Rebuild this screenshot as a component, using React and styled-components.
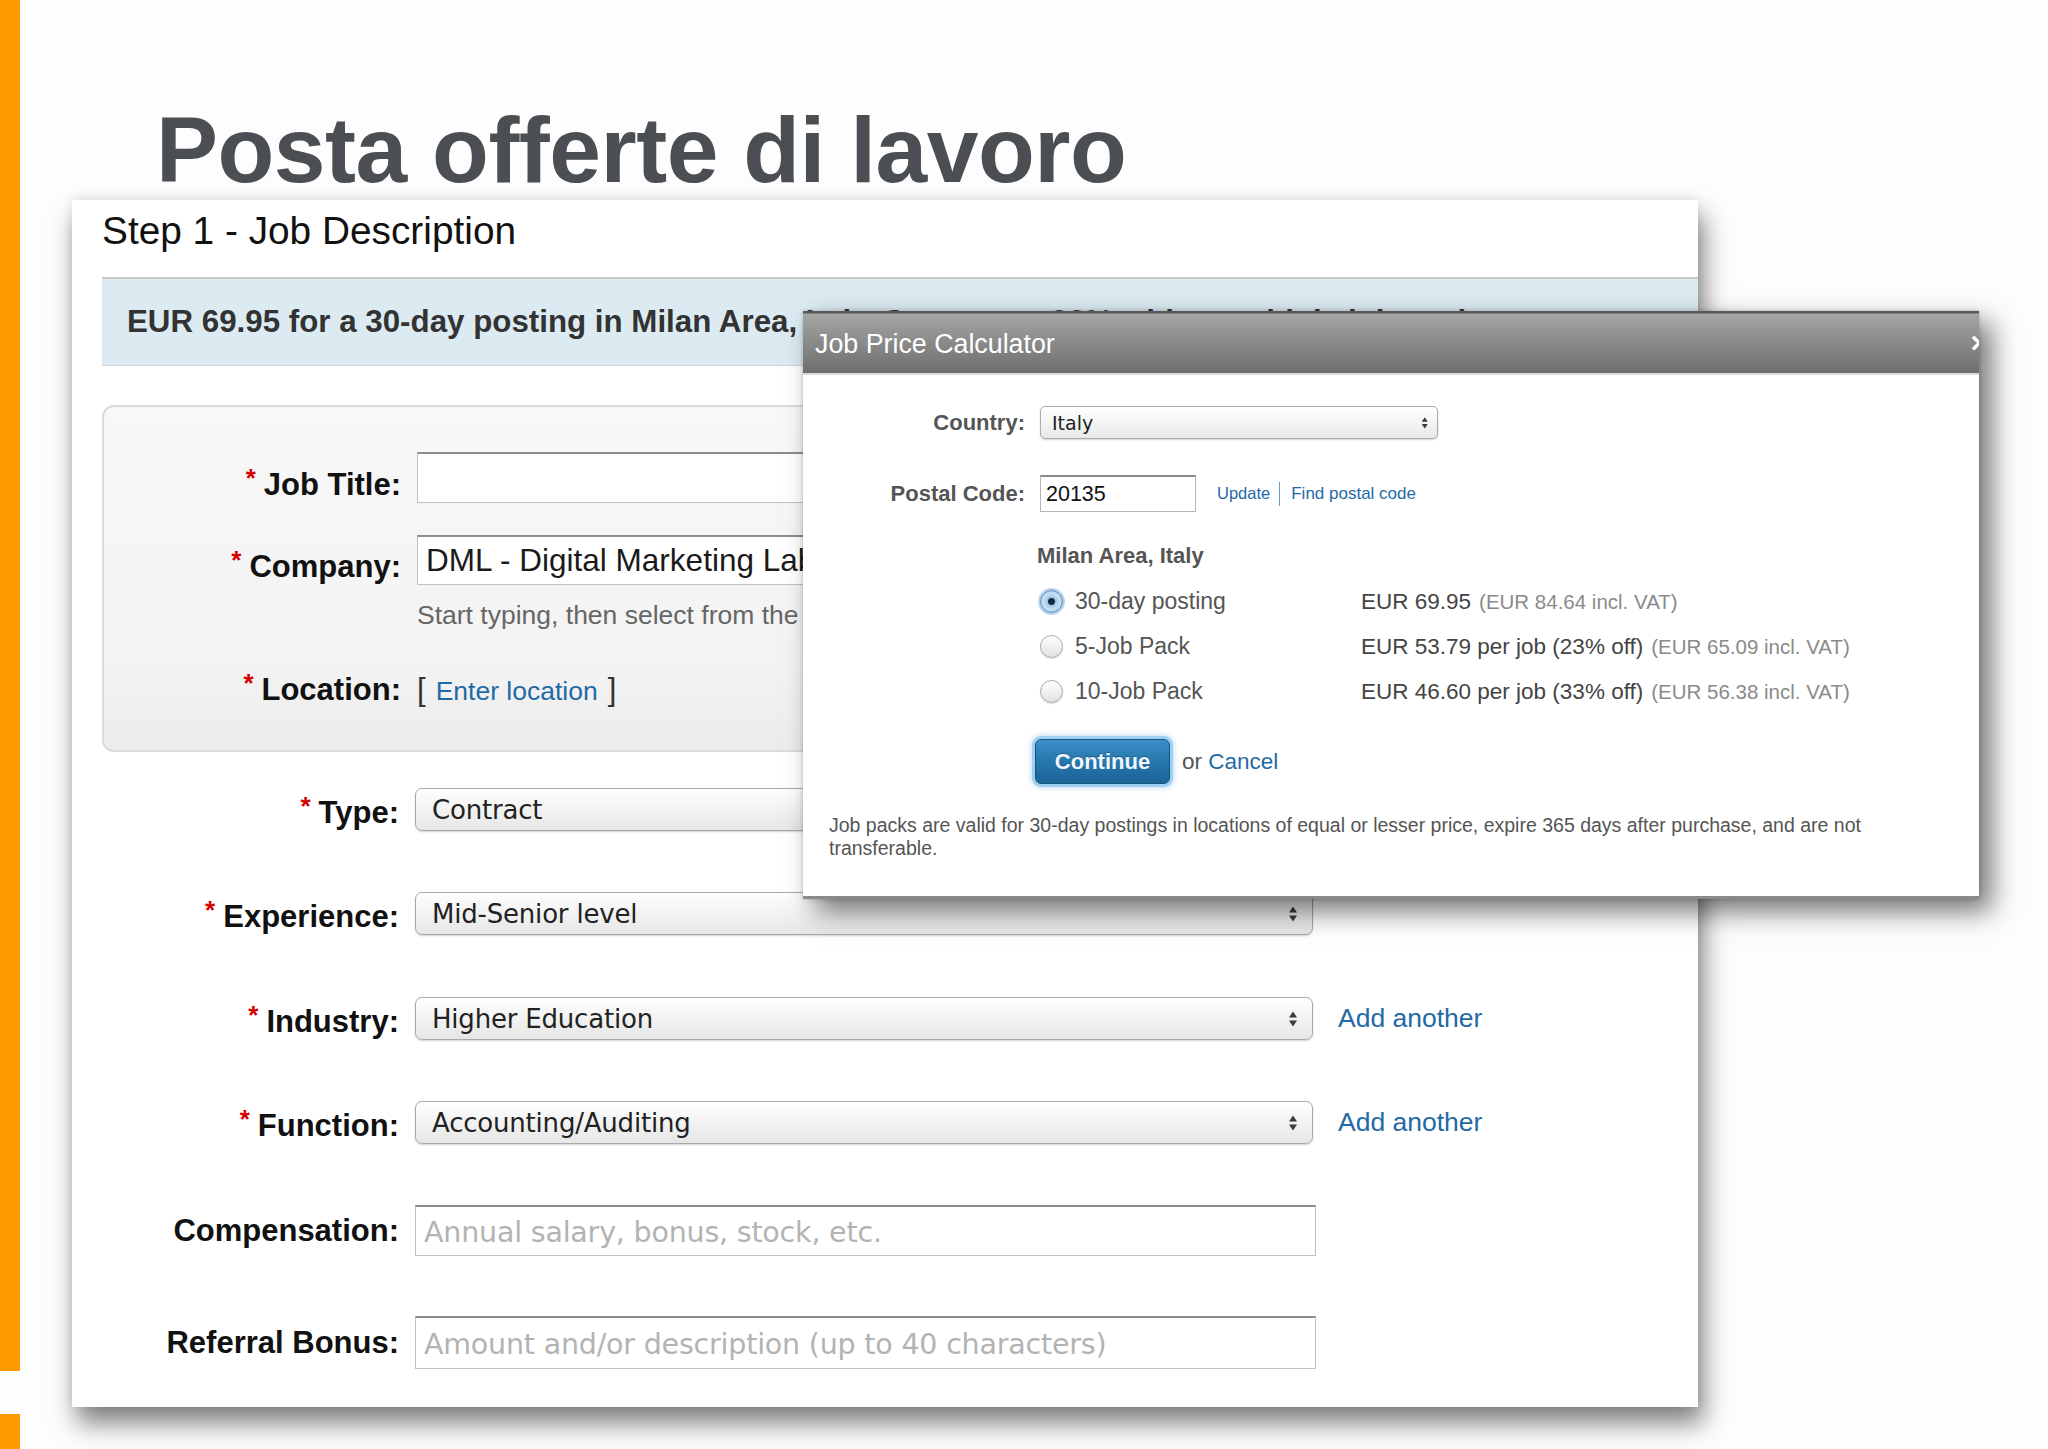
import React from "react";
import styled, { createGlobalStyle } from "styled-components";

const GlobalStyle = createGlobalStyle`
  html, body {
    margin: 0;
    padding: 0;
    background: #fdfdfd;
  }
  body {
    font-family: "Liberation Sans", Arial, sans-serif;
  }
  * {
    box-sizing: border-box;
  }
`;

const Page = styled.div`
  display: flex;
  width: 2048px;
  height: 1449px;
  overflow: hidden;
  background: #fdfdfd;
`;

const Accent = styled.div`
  flex: none;
  width: 20px;
  display: flex;
  flex-direction: column;
  gap: 43px;
`;

const AccentPiece = styled.div`
  background: #ff9a00;
  height: ${({ $h }) => $h}px;
`;

const Content = styled.main`
  flex: 1;
  padding: 104px 0 0 52px;
`;

const Title = styled.h1`
  margin: 0 0 3px 84px;
  font-size: 93px;
  line-height: 93px;
  font-weight: bold;
  color: #4b4f54;
  letter-spacing: -0.5px;
  white-space: nowrap;
`;

const Panel = styled.section`
  position: relative;
  width: 1626px;
  height: 1207px;
  background: #fff;
  padding: 9px 0 0 30px;
  box-shadow: 0 -3px 10px rgba(0, 0, 0, 0.07), 5px 16px 24px rgba(0, 0, 0, 0.5);
`;

const StepTitle = styled.h2`
  margin: 0;
  font-size: 38.8px;
  line-height: 44px;
  font-weight: normal;
  color: #111;
`;

const Banner = styled.div`
  margin-top: 24px;
  height: 89px;
  border-top: 2px solid #c8c8c8;
  border-bottom: 1px solid #d2d2d2;
  background: #dcebf2;
  padding: 25px 0 0 25px;
  font-size: 31.3px;
  line-height: 36px;
  font-weight: bold;
  color: #333;
  white-space: nowrap;
  overflow: hidden;
`;

const GrayBox = styled.div`
  margin-top: 39px;
  width: 1400px;
  height: 347px;
  border: 2px solid #dadada;
  border-radius: 12px;
  background: linear-gradient(180deg, #f8f8f8 0%, #f3f3f3 75%, #ececec 100%);
  padding-top: 45px;
`;

const FieldRow = styled.div`
  display: grid;
  grid-template-columns: 297px auto auto;
  justify-content: start;
  column-gap: 16px;
  align-items: ${({ $align }) => $align || "center"};
  margin-top: ${({ $mt }) => $mt || 0}px;
`;

const Label = styled.label`
  justify-self: end;
  font-size: 31px;
  line-height: 36px;
  font-weight: bold;
  color: #111;
  white-space: nowrap;
`;

const Req = styled.span`
  color: #d40000;
  font-size: 26px;
  vertical-align: 8px;
  margin-right: 8px;
`;

const TextInput = styled.input`
  width: 901px;
  height: ${({ $h }) => $h || 51}px;
  border: 1px solid #c2c2c2;
  border-top: 2px solid #8c8c8c;
  background: #fff;
  padding: 0 8px;
  font-family: "Liberation Sans", Arial, sans-serif;
  font-size: 31.5px;
  color: #1a1a1a;
  outline: none;
  &::placeholder {
    font-family: "DejaVu Sans", sans-serif;
    font-size: 28.5px;
    color: #b3b3b3;
    letter-spacing: -0.2px;
  }
`;

const SelectBox = styled.div`
  width: 898px;
  height: 43px;
  border: 1px solid #a9a9a9;
  border-radius: 7px;
  background: linear-gradient(180deg, #fefefe 0%, #f1f1f1 55%, #e6e6e6 100%);
  box-shadow: 0 1px 2px rgba(0, 0, 0, 0.18);
  display: flex;
  align-items: center;
  justify-content: space-between;
  padding: 0 14px 0 16px;
  font-family: "DejaVu Sans", sans-serif;
  font-size: 26px;
  color: #222;
  letter-spacing: -0.2px;
`;

const Hint = styled.div`
  grid-column: 2;
  font-size: 26.5px;
  line-height: 30px;
  color: #666;
  white-space: nowrap;
`;

const Bracket = styled.span`
  font-size: 31px;
  line-height: 36px;
  color: #333;
`;

const Link = styled.a`
  color: #1f6aa5;
  font-size: ${({ $size }) => $size || 26.5}px;
  margin-left: ${({ $ml }) => $ml || 0}px;
  text-decoration: none;
  cursor: pointer;
  white-space: nowrap;
`;

const LocationValue = styled.div`
  display: flex;
  align-items: baseline;
  gap: 10px;
`;

/* price calculator overlay */

const Dialog = styled.div`
  position: absolute;
  left: 731px;
  top: 111px;
  width: 1176px;
  height: 588px;
  background: #fff;
  border-bottom: 3px solid #8a8a8a;
  box-shadow: 12px 12px 26px rgba(0, 0, 0, 0.55), 0 0 4px rgba(0, 0, 0, 0.2);
  display: flex;
  flex-direction: column;
`;

const DialogHeader = styled.div`
  position: relative;
  flex: none;
  height: 64px;
  overflow: hidden;
  display: flex;
  align-items: center;
  padding: 4px 0 0 12px;
  background: linear-gradient(
    180deg,
    #5a5a5a 0,
    #5a5a5a 2px,
    #a5a5a5 3px,
    #939393 35%,
    #6e6e6e 100%
  );
  border-bottom: 2px solid #dcdcdc;
  color: #fff;
  font-size: 26.8px;
`;

const Close = styled.span`
  position: absolute;
  right: -9px;
  top: 15px;
  font-size: 30px;
  font-weight: bold;
  color: #fff;
`;

const DialogBody = styled.div`
  padding-top: 31px;
  display: flex;
  flex-direction: column;
`;

const DRow = styled.div`
  display: grid;
  grid-template-columns: 222px auto;
  justify-content: start;
  column-gap: 15px;
  align-items: center;
  margin-top: ${({ $mt }) => $mt || 0}px;
`;

const DLabel = styled.label`
  justify-self: end;
  font-size: 22px;
  font-weight: bold;
  color: #555;
`;

const DSelect = styled.div`
  width: 398px;
  height: 33px;
  border: 1px solid #ababab;
  border-radius: 5px;
  background: linear-gradient(180deg, #ffffff 0%, #f2f2f2 60%, #e8e8e8 100%);
  box-shadow: 0 1px 2px rgba(0, 0, 0, 0.18);
  display: flex;
  align-items: center;
  justify-content: space-between;
  padding: 0 9px 0 11px;
  font-family: "DejaVu Sans", sans-serif;
  font-size: 19px;
  color: #222;
`;

const PostalWrap = styled.div`
  display: flex;
  align-items: center;
`;

const PostalInput = styled.input`
  width: 156px;
  height: 37px;
  border: 1px solid #b5b5b5;
  border-top: 2px solid #8a8a8a;
  padding: 0 5px;
  font-family: "Liberation Sans", Arial, sans-serif;
  font-size: 21.5px;
  color: #111;
  outline: none;
  margin-right: 21px;
`;

const Sep = styled.span`
  width: 1px;
  height: 24px;
  background: #6a9cc4;
  margin: 0 11px 0 9px;
`;

const AreaTitle = styled.div`
  margin: 31px 0 0 234px;
  font-size: 22px;
  line-height: 26px;
  font-weight: bold;
  color: #555;
`;

const Options = styled.div`
  margin: 10px 0 0 237px;
  display: flex;
  flex-direction: column;
`;

const OptionRow = styled.div`
  height: 45px;
  display: grid;
  grid-template-columns: 321px auto;
  align-items: center;
`;

const OptionName = styled.div`
  display: flex;
  align-items: center;
  gap: 12px;
  font-size: 23px;
  color: #555;
`;

const Radio = styled.span`
  flex: none;
  width: 23px;
  height: 23px;
  border-radius: 50%;
  border: 1px solid ${({ $on }) => ($on ? "#4f84b8" : "#a8a8a8")};
  background: ${({ $on }) =>
    $on
      ? "radial-gradient(circle, #14283c 0 3px, #9cc4e6 4px, #c9e0f3 55%, #7fb0dc 100%)"
      : "linear-gradient(180deg, #ffffff, #e2e2e2)"};
  box-shadow: ${({ $on }) =>
    $on ? "0 0 0 2px rgba(120, 170, 220, 0.5)" : "0 1px 1px rgba(0,0,0,0.12)"};
`;

const Price = styled.div`
  font-size: 22.5px;
  color: #444;
  white-space: nowrap;
`;

const Vat = styled.span`
  font-size: 20.5px;
  color: #8a8a8a;
  margin-left: 8px;
`;

const Actions = styled.div`
  margin: 25px 0 0 232px;
  display: flex;
  align-items: center;
  gap: 12px;
  font-size: 22.5px;
  color: #555;
`;

const ContinueButton = styled.button`
  width: 135px;
  height: 45px;
  border-radius: 6px;
  border: 1px solid #14557f;
  background: linear-gradient(180deg, #3a8fc6 0%, #2677ad 50%, #1b6498 100%);
  box-shadow: 0 0 0 3px #9dd0f2, 0 0 5px 4px rgba(120, 180, 230, 0.45);
  color: #eef7ff;
  font-family: "Liberation Sans", Arial, sans-serif;
  font-size: 22px;
  font-weight: bold;
  text-shadow: 0 -1px 0 rgba(0, 0, 0, 0.3);
  cursor: pointer;
`;

const Footnote = styled.p`
  margin: 30px 50px 0 26px;
  font-size: 19.5px;
  line-height: 23px;
  color: #555;
`;

const Arrows = ({ size = 1 }) => (
  <svg width={10 * size} height={18 * size} viewBox="0 0 10 18">
    <path d="M5 1.5 L9 7.5 L1 7.5 Z" fill="#3a3a3a" />
    <path d="M5 16.5 L9 10.5 L1 10.5 Z" fill="#3a3a3a" />
  </svg>
);

const Field = ({ label, required, children, ...rest }) => (
  <FieldRow {...rest}>
    <Label>
      {required && <Req>*</Req>}
      {label}
    </Label>
    {children}
  </FieldRow>
);

const Select = ({ value }) => (
  <SelectBox>
    <span>{value}</span>
    <Arrows />
  </SelectBox>
);

const options = [
  { name: "30-day posting", price: "EUR 69.95", vat: "(EUR 84.64 incl. VAT)", on: true },
  { name: "5-Job Pack", price: "EUR 53.79 per job (23% off)", vat: "(EUR 65.09 incl. VAT)" },
  { name: "10-Job Pack", price: "EUR 46.60 per job (33% off)", vat: "(EUR 56.38 incl. VAT)" },
];

const App = () => {
  return (
    <Page>
      <GlobalStyle />
      <Accent>
        <AccentPiece $h={1371} />
        <AccentPiece $h={35} />
      </Accent>
      <Content>
        <Title>Posta offerte di lavoro</Title>
        <Panel>
          <StepTitle>Step 1 - Job Description</StepTitle>
          <Banner>
            EUR 69.95 for a 30-day posting in Milan Area, Italy. Save up to 33% with a
            multiple job pack.
          </Banner>

          <GrayBox>
            <Field label="Job Title:" required $align="end">
              <TextInput readOnly />
            </Field>
            <Field label="Company:" required $align="end" $mt={32}>
              <TextInput readOnly $h={50} defaultValue="DML - Digital Marketing Lab" />
            </Field>
            <FieldRow $mt={15}>
              <Hint>Start typing, then select from the list.</Hint>
            </FieldRow>
            <Field label="Location:" required $align="baseline" $mt={35}>
              <LocationValue>
                <Bracket>[</Bracket>
                <Link>Enter location</Link>
                <Bracket>]</Bracket>
              </LocationValue>
            </Field>
          </GrayBox>

          <Field label="Type:" required $mt={36}>
            <Select value="Contract" />
          </Field>
          <Field label="Experience:" required $mt={61}>
            <Select value="Mid-Senior level" />
          </Field>
          <Field label="Industry:" required $mt={62}>
            <Select value="Higher Education" />
            <Link $ml={9}>Add another</Link>
          </Field>
          <Field label="Function:" required $mt={61}>
            <Select value="Accounting/Auditing" />
            <Link $ml={9}>Add another</Link>
          </Field>
          <Field label="Compensation:" $mt={61}>
            <TextInput readOnly placeholder="Annual salary, bonus, stock, etc." />
          </Field>
          <Field label="Referral Bonus:" $mt={60}>
            <TextInput
              readOnly
              $h={53}
              placeholder="Amount and/or description (up to 40 characters)"
            />
          </Field>

          <Dialog>
            <DialogHeader>
              Job Price Calculator
              <Close>×</Close>
            </DialogHeader>
            <DialogBody>
              <DRow>
                <DLabel>Country:</DLabel>
                <DSelect>
                  <span>Italy</span>
                  <Arrows size={0.75} />
                </DSelect>
              </DRow>
              <DRow $mt={36}>
                <DLabel>Postal Code:</DLabel>
                <PostalWrap>
                  <PostalInput readOnly defaultValue="20135" />
                  <Link $size={16.5}>Update</Link>
                  <Sep />
                  <Link $size={17}>Find postal code</Link>
                </PostalWrap>
              </DRow>
              <AreaTitle>Milan Area, Italy</AreaTitle>
              <Options>
                {options.map((o) => (
                  <OptionRow key={o.name}>
                    <OptionName>
                      <Radio $on={o.on} />
                      {o.name}
                    </OptionName>
                    <Price>
                      {o.price}
                      <Vat>{o.vat}</Vat>
                    </Price>
                  </OptionRow>
                ))}
              </Options>
              <Actions>
                <ContinueButton>Continue</ContinueButton>
                <span>
                  or <Link $size={22.5}>Cancel</Link>
                </span>
              </Actions>
              <Footnote>
                Job packs are valid for 30-day postings in locations of equal or lesser
                price, expire 365 days after purchase, and are not transferable.
              </Footnote>
            </DialogBody>
          </Dialog>
        </Panel>
      </Content>
    </Page>
  );
};

export default App;
